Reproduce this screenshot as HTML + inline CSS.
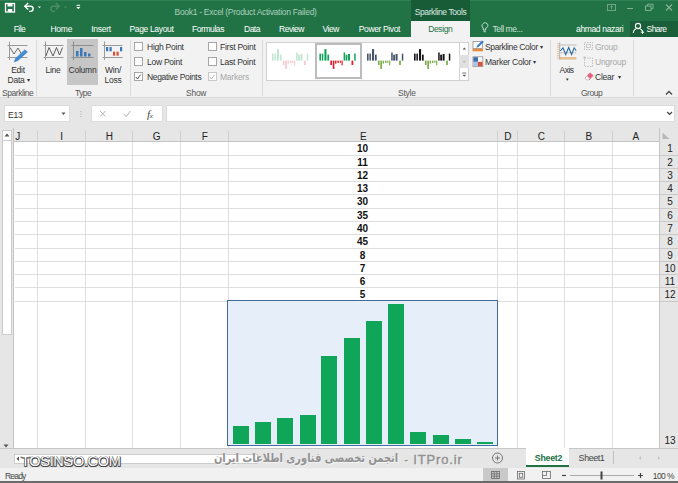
<!DOCTYPE html>
<html>
<head>
<meta charset="utf-8">
<title>Excel Sparkline</title>
<style>
*{box-sizing:border-box;margin:0;padding:0}
html,body{width:678px;height:483px;overflow:hidden;background:#fff}
body{position:relative;font-family:"Liberation Sans",sans-serif;font-size:8px;color:#333}
.a{position:absolute;white-space:nowrap}
.t{position:absolute;white-space:nowrap;line-height:10px;font-size:8.500px;letter-spacing:-0.250px}
.w{color:#fff}
.c{text-align:center}
#top{left:0;top:0;width:678px;height:37px;background:#217346}
#ribbon{left:0;top:37px;width:678px;height:61px;background:#f2f2f2;border-bottom:1px solid #dadada}
#fbar{left:0;top:98px;width:678px;height:30px;background:#e6e6e6}
.sep{position:absolute;width:1px;background:#dadada;top:40px;height:56px}
.cb{position:absolute;width:8.500px;height:8.500px;border:1px solid #a6a6a6;background:#fdfdfd}
.gl{position:absolute;background:#dedede}
.hd{position:absolute;font-size:10px;line-height:14px;color:#222;text-align:center;top:129.500px;height:14px;padding-left:1.500px}
.rh{position:absolute;font-size:10px;line-height:13px;color:#222;text-align:center;left:661px;width:18px}
.num{position:absolute;font-size:10px;font-weight:bold;line-height:13px;color:#111;left:228px;width:269px;text-align:center}
.bar{position:absolute;background:#0fa65a;width:16px}
</style>
</head>
<body>
<!-- top green bar -->
<div class="a" id="top"></div>
<div class="a" style="left:0;top:0;width:678px;height:1px;background:#2f7f57"></div>
<div class="a" style="left:411px;top:0;width:59px;height:21px;background:#185c37"></div>
<div class="a" style="left:411px;top:21px;width:59px;height:16px;background:#f2f2f2"></div>
<div class="a" style="left:630px;top:21px;width:48px;height:16px;background:#1a5f39"></div>
<div class="t w" style="left:174.500px;top:6.500px;color:#a9d0ba;letter-spacing:-0.290px">Book1 - Excel (Product Activation Failed)</div>
<div class="t w" style="left:411px;top:6.500px;width:59px;text-align:center;color:#dcebe2;letter-spacing:-0.400px">Sparkline Tools</div>
<div class="t w" style="left:13.8px;top:24px;font-size:8.500px;letter-spacing:-0.62px">File</div>
<div class="t w" style="left:50.4px;top:24px;font-size:8.500px;letter-spacing:-0.22px">Home</div>
<div class="t w" style="left:91.2px;top:24px;font-size:8.500px;letter-spacing:-0.25px">Insert</div>
<div class="t w" style="left:129.4px;top:24px;font-size:8.500px;letter-spacing:-0.33px">Page Layout</div>
<div class="t w" style="left:192.0px;top:24px;font-size:8.500px;letter-spacing:-0.43px">Formulas</div>
<div class="t w" style="left:244.0px;top:24px;font-size:8.500px;letter-spacing:-0.50px">Data</div>
<div class="t w" style="left:279.0px;top:24px;font-size:8.500px;letter-spacing:-0.48px">Review</div>
<div class="t w" style="left:322.5px;top:24px;font-size:8.500px;letter-spacing:-0.45px">View</div>
<div class="t w" style="left:358.8px;top:24px;font-size:8.500px;letter-spacing:-0.38px">Power Pivot</div>
<div class="t" style="left:410.8px;top:24px;font-size:8.500px;letter-spacing:-0.43px;width:59px;text-align:center;color:#217346">Design</div>
<div class="t w" style="left:492.5px;top:24px;font-size:8.500px;letter-spacing:-0.40px;color:#cfe3d6">Tell me...</div>
<div class="t w" style="left:576.0px;top:24px;font-size:8.500px;letter-spacing:-0.35px">ahmad nazari</div>
<div class="t w" style="left:646.6px;top:24px;font-size:8.500px;letter-spacing:-0.58px">Share</div>
<!-- quick access icons -->
<svg class="a" style="left:0;top:0" width="100" height="20" viewBox="0 0 100 20">
 <rect x="5.5" y="3.5" width="9" height="8.5" fill="none" stroke="#fff" stroke-width="1.3"/>
 <rect x="7.5" y="3.5" width="5" height="3" fill="#fff"/>
 <rect x="7.8" y="9" width="4.4" height="3" fill="#fff"/>
 <path d="M25.5 6.2 h5 a2.6 2.6 0 0 1 0 5.2 h-1.5" fill="none" stroke="#fff" stroke-width="1.4"/>
 <path d="M28.2 3 l-3.4 3.2 3.4 3.2" fill="none" stroke="#fff" stroke-width="1.4"/>
 <path d="M38 6.5 h3 l-1.5 1.8z" fill="#fff"/>
 <path d="M58.5 6.2 h-5 a2.6 2.6 0 0 0 0 5.2 h1.5" fill="none" stroke="#4b8f68" stroke-width="1.4"/>
 <path d="M55.8 3 l3.4 3.2 -3.4 3.2" fill="none" stroke="#4b8f68" stroke-width="1.4"/>
 <path d="M64 6.5 h3 l-1.5 1.8z" fill="#4b8f68"/>
 <rect x="76.5" y="4.8" width="3.6" height="1" fill="#fff"/>
 <path d="M76.3 7 h4 l-2 2.2z" fill="#fff"/>
</svg>
<!-- window controls -->
<svg class="a" style="left:600px;top:0" width="78" height="20" viewBox="0 0 78 20">
 <rect x="7.5" y="4.5" width="8" height="6" fill="none" stroke="#6fa486" stroke-width="1"/>
 <path d="M11.5 9 v-3 M10 7.2 l1.5-1.4 1.5 1.4" fill="none" stroke="#6fa486" stroke-width="0.9"/>
 <path d="M27 8.5 h6" stroke="#7fae93" stroke-width="1"/>
 <rect x="45.500" y="6" width="5.500" height="4.500" fill="none" stroke="#7fae93" stroke-width="1"/>
 <path d="M47.500 6 v-1.800 h5.500 v4.500 h-2" fill="none" stroke="#7fae93" stroke-width="1"/>
 <path d="M66 4.500 l6 6 M72 4.500 l-6 6" stroke="#86b59b" stroke-width="1.100"/>
</svg>
<!-- bulb + share icon -->
<svg class="a" style="left:478px;top:20px" width="200" height="17" viewBox="0 0 200 17">
 <path d="M6.500 3.500 a2.700 2.700 0 1 1 2.400 4.600 v2 h-2.400 v-2 a2.700 2.700 0 0 1 0 -4.600z" fill="none" stroke="#d7e8dd" stroke-width="0.9" transform="translate(-1.200,0)"/>
 <path d="M5.400 11.700 h2.400" stroke="#d7e8dd" stroke-width="0.9"/>
 <circle cx="160" cy="6" r="2.600" fill="none" stroke="#fff" stroke-width="1.100"/>
 <path d="M155.300 13 a4.700 4.700 0 0 1 9.400 0" fill="none" stroke="#fff" stroke-width="1.100"/>
 <path d="M164.500 10.500 v3.400 M162.800 12.200 h3.400" stroke="#fff" stroke-width="1"/>
</svg>

<!-- ribbon -->
<div class="a" id="ribbon"></div>
<div class="sep" style="left:36px"></div>
<div class="sep" style="left:130px"></div>
<div class="sep" style="left:262px"></div>
<div class="sep" style="left:550px"></div>
<div class="sep" style="left:633px"></div>
<div class="a" style="left:67px;top:39px;width:31px;height:46px;background:#c6c6c6"></div>
<!-- ribbon big icons -->
<svg class="a" style="left:0;top:37px" width="135" height="30" viewBox="0 0 135 30">
 <!-- edit data -->
 <path d="M9.500 4.500 v18.500 M7.500 20.500 h20 M7.500 8.500 h20" stroke="#9a9a9a" stroke-width="1" fill="none"/>
 <path d="M10 10.500 l4 6.500 4-6 3.500 6" stroke="#6d6d6d" stroke-width="1" fill="none"/>
 <path d="M14.300 24.700 l1.200-3.200 9.500-8.800 2.400 2.400 -9.700 8.600z" fill="#3f8fd6" stroke="#2a69a8" stroke-width="0.500"/>
 <!-- line -->
 <path d="M45.500 4.500 v18.500 M43.500 20.500 h20 M43.500 8.500 h20" stroke="#9a9a9a" stroke-width="1" fill="none"/>
 <path d="M46 19 l3-8.500 4 8.500 3.500-8.500 3 7.500 3-7.500" stroke="#5e5e5e" stroke-width="1" fill="none"/>
 <!-- column -->
 <path d="M73.500 4.500 v18.500 M71.500 20.500 h22 M71.500 8.500 h22" stroke="#8f8f8f" stroke-width="1" fill="none"/>
 <rect x="76" y="14" width="2.500" height="5.500" fill="#3b78b8"/>
 <rect x="80" y="11" width="2.500" height="8.500" fill="#3b78b8"/>
 <rect x="84" y="15" width="2.500" height="4.500" fill="#3b78b8"/>
 <rect x="88" y="16.500" width="2.500" height="3" fill="#3b78b8"/>
 <!-- win loss -->
 <path d="M104.500 4.500 v18.500 M102.500 20.500 h20 M102.500 8.500 h20" stroke="#9a9a9a" stroke-width="1" fill="none"/>
 <rect x="106" y="10" width="2.200" height="4.300" fill="#3b78b8"/>
 <rect x="109.500" y="10" width="2.200" height="4.300" fill="#3b78b8"/>
 <rect x="113" y="14.700" width="2.200" height="4" fill="#d9533c"/>
 <rect x="116.500" y="14.700" width="2.200" height="4" fill="#d9533c"/>
 <rect x="120" y="10" width="2.200" height="4.300" fill="#3b78b8"/>
</svg>
<div class="t c" style="left:4px;top:65px;width:28px">Edit</div>
<div class="t c" style="left:3.500px;top:75px;width:30px">Data <span style="font-size:6px;vertical-align:1.300px">&#9662;</span></div>
<div class="t c" style="left:39px;top:65px;width:28px">Line</div>
<div class="t c" style="left:67px;top:65px;width:31px">Column</div>
<div class="t c" style="left:100px;top:65px;width:26px">Win/</div>
<div class="t c" style="left:100px;top:75px;width:26px">Loss</div>
<div class="t" style="left:2px;top:88px;color:#555;letter-spacing:-0.450px">Sparkline</div>
<div class="t" style="left:75px;top:88px;color:#555;letter-spacing:-0.550px">Type</div>
<div class="t" style="left:186px;top:88px;color:#555">Show</div>
<div class="t" style="left:398px;top:88px;color:#555">Style</div>
<div class="t" style="left:581px;top:88px;color:#555;letter-spacing:-0.500px">Group</div>
<!-- show checkboxes -->
<div class="cb" style="left:134px;top:42.300px"></div>
<div class="cb" style="left:134px;top:57.300px"></div>
<div class="cb" style="left:134px;top:72.300px"></div>
<div class="cb" style="left:208px;top:42.300px"></div>
<div class="cb" style="left:208px;top:57.300px"></div>
<div class="cb" style="left:208px;top:72.300px;border-color:#c9c9c9"></div>
<svg class="a" style="left:134.300px;top:72.600px" width="90" height="8" viewBox="0 0 90 8">
 <path d="M1.800 4 l1.700 2 3-4.300" fill="none" stroke="#444" stroke-width="0.9"/>
 <path d="M75.800 4 l1.700 2 3-4.300" fill="none" stroke="#b5b5b5" stroke-width="0.9"/>
</svg>
<div class="t" style="left:147px;top:42px">High Point</div>
<div class="t" style="left:147px;top:57px">Low Point</div>
<div class="t" style="left:147px;top:72px;letter-spacing:-0.350px">Negative Points</div>
<div class="t" style="left:220px;top:42px">First Point</div>
<div class="t" style="left:220px;top:57px">Last Point</div>
<div class="t" style="left:220px;top:72px;color:#a8a8a8">Markers</div>
<!-- style gallery -->
<div class="a" style="left:266px;top:42px;width:203px;height:39px;background:#fff;border:1px solid #d0d0d0"></div>
<div class="a" style="left:315px;top:43px;width:47px;height:36px;background:#fff;border:2px solid #bcbcbc"></div>
<div class="a" style="left:459px;top:42px;width:10px;height:39px;background:#fff;border:1px solid #d0d0d0"></div>
<div class="a" style="left:459px;top:55px;width:10px;height:13px;background:#e0e0e0"></div>
<svg class="a" style="left:266px;top:42px" width="204" height="40" viewBox="0 0 204 40">
 <g fill="#c3e6d2"><rect x="5.9" y="11.6" width="1.6" height="7"/><rect x="8.3" y="11.6" width="1.5" height="7"/><rect x="10.9" y="7.1" width="2.1" height="11.5"/><rect x="13.9" y="12.6" width="1.7" height="6"/><rect x="30.1" y="10.5" width="1.5" height="8.1"/><rect x="32.1" y="12.7" width="1.8" height="5.9"/><rect x="34.5" y="12.0" width="2" height="6.6"/><rect x="40.7" y="11.6" width="1.5" height="7"/></g>
 <g fill="#f6cbd3"><rect x="16.8" y="18.6" width="1.7" height="4.4"/><rect x="19.2" y="18.6" width="1.7" height="8.4"/><rect x="21.5" y="18.6" width="1.5" height="3"/><rect x="23.9" y="18.6" width="1.5" height="2.3"/><rect x="26.2" y="18.6" width="1.2" height="2.3"/><rect x="28.0" y="18.6" width="1.2" height="4.8"/><rect x="38.0" y="18.6" width="1.8" height="4.4"/></g>
 <g fill="#12a25c"><rect x="53.4" y="11.6" width="1.6" height="7"/><rect x="55.8" y="11.6" width="1.5" height="7"/><rect x="58.4" y="7.1" width="2.1" height="11.5"/><rect x="61.4" y="12.6" width="1.7" height="6"/><rect x="77.6" y="10.5" width="1.5" height="8.1"/><rect x="79.6" y="12.7" width="1.8" height="5.9"/><rect x="82.0" y="12.0" width="2" height="6.6"/><rect x="88.2" y="11.6" width="1.5" height="7"/></g>
 <g fill="#e0202a"><rect x="64.3" y="18.6" width="1.7" height="4.4"/><rect x="66.7" y="18.6" width="1.7" height="8.4"/><rect x="69.0" y="18.6" width="1.5" height="3"/><rect x="71.4" y="18.6" width="1.5" height="2.3"/><rect x="73.7" y="18.6" width="1.2" height="2.3"/><rect x="75.5" y="18.6" width="1.2" height="4.8"/><rect x="85.5" y="18.6" width="1.8" height="4.4"/></g>
 <g fill="#44546a"><rect x="101.0" y="11.6" width="1.6" height="7"/><rect x="103.4" y="11.6" width="1.5" height="7"/><rect x="106.0" y="7.1" width="2.1" height="11.5"/><rect x="109.0" y="12.6" width="1.7" height="6"/><rect x="125.2" y="10.5" width="1.5" height="8.1"/><rect x="127.2" y="12.7" width="1.8" height="5.9"/><rect x="129.6" y="12.0" width="2" height="6.6"/><rect x="135.8" y="11.6" width="1.5" height="7"/></g>
 <g fill="#7fb04f"><rect x="111.9" y="18.6" width="1.7" height="4.4"/><rect x="114.3" y="18.6" width="1.7" height="8.4"/><rect x="116.6" y="18.6" width="1.5" height="3"/><rect x="119.0" y="18.6" width="1.5" height="2.3"/><rect x="121.3" y="18.6" width="1.2" height="2.3"/><rect x="123.1" y="18.6" width="1.2" height="4.8"/><rect x="133.1" y="18.6" width="1.8" height="4.4"/></g>
 <g fill="#151515"><rect x="148.0" y="11.6" width="1.6" height="7"/><rect x="150.4" y="11.6" width="1.5" height="7"/><rect x="153.0" y="7.1" width="2.1" height="11.5"/><rect x="156.0" y="12.6" width="1.7" height="6"/><rect x="172.2" y="10.5" width="1.5" height="8.1"/><rect x="174.2" y="12.7" width="1.8" height="5.9"/><rect x="176.6" y="12.0" width="2" height="6.6"/><rect x="182.8" y="11.6" width="1.5" height="7"/></g>
 <g fill="#7fb04f"><rect x="158.9" y="18.6" width="1.7" height="4.4"/><rect x="161.3" y="18.6" width="1.7" height="8.4"/><rect x="163.6" y="18.6" width="1.5" height="3"/><rect x="166.0" y="18.6" width="1.5" height="2.3"/><rect x="168.3" y="18.6" width="1.2" height="2.3"/><rect x="170.1" y="18.6" width="1.2" height="4.8"/><rect x="180.1" y="18.6" width="1.8" height="4.4"/></g>
 <path d="M196.500 7.500 l1.800 -2 1.800 2z" fill="#555"/>
 <path d="M196.500 19 l1.800 2 1.800 -2z" fill="#bbb"/>
 <path d="M196.300 31 h4" stroke="#555" stroke-width="0.800"/>
 <path d="M196.500 32.800 l1.800 2 1.800 -2z" fill="#555"/>
</svg>
<!-- sparkline color / marker color -->
<svg class="a" style="left:472px;top:40px" width="20" height="32" viewBox="0 0 20 32">
 <rect x="1" y="1.500" width="9.500" height="7" fill="#fff" stroke="#8f8f8f" stroke-width="0.800"/>
 <path d="M4.300 7.800 l0.800-2.300 5-5 1.700 1.600 -5.200 5z" fill="#3d7fc9"/>
 <rect x="0.500" y="8.700" width="10.500" height="2.600" fill="#e98a3f"/>
 <rect x="1" y="16.800" width="9.800" height="9.800" fill="#fff" stroke="#8f8f8f" stroke-width="0.800"/>
 <rect x="1.400" y="17.200" width="4.600" height="4.600" fill="#3b6db0"/>
 <rect x="1.400" y="21.800" width="4.600" height="4.400" fill="#a9c4e4"/>
 <rect x="6" y="21.800" width="4.400" height="4.400" fill="#d9533c"/>
</svg>
<div class="t" style="left:485px;top:42px;letter-spacing:-0.350px">Sparkline Color <span style="font-size:6px;vertical-align:1.300px">&#9662;</span></div>
<div class="t" style="left:485px;top:57px">Marker Color <span style="font-size:6px;vertical-align:1.300px">&#9662;</span></div>
<!-- axis -->
<svg class="a" style="left:555px;top:40px" width="30" height="24" viewBox="0 0 30 24">
 <path d="M3.100 3 v16.600" stroke="#e9c9a3" stroke-width="1.800" stroke-dasharray="1.200 0.800"/>
 <rect x="4.700" y="17.100" width="16.700" height="2.500" fill="#e6be90"/>
 <path d="M4.700 2.600 v17" stroke="#a9a9a9" stroke-width="0.900"/>
 <path d="M4.700 5 h16.700" stroke="#b5b5b5" stroke-width="0.900"/>
 <path d="M4.700 12.800 h16.700" stroke="#b5b5b5" stroke-width="0.700"/>
 <path d="M5.300 11 l2.700-3.200 2.700 6.700 3-7 2.900 7 2.600-6.700 2 2.900" stroke="#2b6aa3" stroke-width="1.100" fill="none"/>
</svg>
<div class="t c" style="left:552.500px;top:65px;width:28px;letter-spacing:-0.550px">Axis</div>
<div class="t c" style="left:553px;top:74px;width:28px;font-size:5px">&#9662;</div>
<svg class="a" style="left:582px;top:40px" width="14" height="45" viewBox="0 0 14 45">
 <rect x="2.500" y="2.500" width="8" height="7" fill="none" stroke="#b5b5b5" stroke-width="0.800" stroke-dasharray="1.500 1"/>
 <rect x="4.500" y="4.500" width="4" height="3" fill="none" stroke="#c2c2c2" stroke-width="0.800"/>
 <rect x="2.500" y="18" width="8" height="8.500" fill="none" stroke="#b5b5b5" stroke-width="0.800" stroke-dasharray="1.500 1"/>
 <rect x="1.500" y="16.500" width="2" height="2" fill="#c2c2c2"/>
 <path d="M3 38 l5-5.500 3.500 3 -4 4.500 h-2.500z" fill="#e8607a"/>
 <path d="M3 38 l2 -2.200 3 2.800 -1.300 1.400 h-2.200z" fill="#f6f6f6" stroke="#999" stroke-width="0.500"/>
</svg>
<div class="t" style="left:595px;top:42px;color:#a8a8a8">Group</div>
<div class="t" style="left:595px;top:57px;color:#a8a8a8">Ungroup</div>
<div class="t" style="left:595px;top:72px">Clear &nbsp;<span style="font-size:6px;vertical-align:1.300px">&#9662;</span></div>
<svg class="a" style="left:664px;top:89px" width="10" height="8" viewBox="0 0 10 8"><path d="M2 5.500 l3-3 3 3" fill="none" stroke="#444" stroke-width="1.300"/></svg>

<!-- formula bar -->
<div class="a" id="fbar"></div>
<div class="a" style="left:4px;top:105px;width:66px;height:17px;background:#fff;border:1px solid #dcdcdc"></div>
<div class="a" style="left:91px;top:105px;width:72px;height:17px;background:#fff;border:1px solid #dcdcdc"></div>
<div class="a" style="left:166px;top:105px;width:509px;height:17px;background:#fff;border:1px solid #dcdcdc"></div>
<div class="t" style="left:8px;top:110px">E13</div>
<svg class="a" style="left:55px;top:106px" width="120" height="16" viewBox="0 0 120 16">
 <path d="M6.500 6.500 h4 l-2 2.400z" fill="#555"/>
 <path d="M26 5 v1 M26 7.500 v1 M26 10 v1" stroke="#aaa" stroke-width="1"/>
 <path d="M45 5 l5.500 5.500 M50.500 5 l-5.500 5.500" stroke="#b8b8b8" stroke-width="1"/>
 <path d="M69 8 l2.200 2.800 4-5.800" fill="none" stroke="#b8b8b8" stroke-width="1"/>
 <path d="M665.500 6.500 l2 2 2-2" fill="none" stroke="#555" stroke-width="1" transform="translate(-55,0)"/>
</svg>
<div class="t" style="left:147px;top:108.500px;font-family:'Liberation Serif',serif;font-style:italic;font-size:11px;color:#444">f<span style="font-size:7px">x</span></div>
<svg class="a" style="left:662px;top:106px" width="16" height="16" viewBox="0 0 16 16"><path d="M5.200 6 l2.400 2.400 2.400-2.400" fill="none" stroke="#444" stroke-width="1.300"/></svg>

<!-- sheet headers -->
<div class="a" style="left:0;top:128px;width:678px;height:14px;background:#e6e6e6;border-bottom:1px solid #c4c4c4"></div>
<div class="a" style="left:659px;top:128px;width:19px;height:320px;background:#e6e6e6;border-left:1px solid #c4c4c4"></div>
<div class="a" style="left:0;top:128px;width:14px;height:320px;background:#e6e6e6;border-right:1px solid #c4c4c4"></div>
<div class="a" style="left:2px;top:130px;width:10px;height:205px;background:#fff;border:1px solid #cbcbcb"></div>
<div class="a" style="left:2px;top:140px;width:10px;height:1px;background:#cbcbcb"></div>
<div class="hd" style="left:13px;width:8px">J</div>
<div class="hd" style="left:37px;width:48px">I</div>
<div class="hd" style="left:85px;width:47px">H</div>
<div class="hd" style="left:132px;width:48px">G</div>
<div class="hd" style="left:180px;width:48px">F</div>
<div class="hd" style="left:228px;width:269px">E</div>
<div class="hd" style="left:497px;width:20px">D</div>
<div class="hd" style="left:517px;width:47px">C</div>
<div class="hd" style="left:564px;width:48px">B</div>
<div class="hd" style="left:612px;width:46px">A</div>
<!-- grid -->
<div class="gl" style="left:37px;top:142px;width:1px;height:306px"></div>
<div class="a" style="left:37px;top:131px;width:1px;height:10px;background:#cfcfcf"></div>
<div class="gl" style="left:85px;top:142px;width:1px;height:306px"></div>
<div class="a" style="left:85px;top:131px;width:1px;height:10px;background:#cfcfcf"></div>
<div class="gl" style="left:132px;top:142px;width:1px;height:306px"></div>
<div class="a" style="left:132px;top:131px;width:1px;height:10px;background:#cfcfcf"></div>
<div class="gl" style="left:180px;top:142px;width:1px;height:306px"></div>
<div class="a" style="left:180px;top:131px;width:1px;height:10px;background:#cfcfcf"></div>
<div class="gl" style="left:228px;top:142px;width:1px;height:306px"></div>
<div class="a" style="left:228px;top:131px;width:1px;height:10px;background:#cfcfcf"></div>
<div class="gl" style="left:497px;top:142px;width:1px;height:306px"></div>
<div class="a" style="left:497px;top:131px;width:1px;height:10px;background:#cfcfcf"></div>
<div class="gl" style="left:517px;top:142px;width:1px;height:306px"></div>
<div class="a" style="left:517px;top:131px;width:1px;height:10px;background:#cfcfcf"></div>
<div class="gl" style="left:564px;top:142px;width:1px;height:306px"></div>
<div class="a" style="left:564px;top:131px;width:1px;height:10px;background:#cfcfcf"></div>
<div class="gl" style="left:612px;top:142px;width:1px;height:306px"></div>
<div class="a" style="left:612px;top:131px;width:1px;height:10px;background:#cfcfcf"></div>
<div class="gl" style="left:15px;top:155px;width:644px;height:1px"></div>
<div class="a" style="left:660px;top:155px;width:18px;height:1px;background:#c9c9c9"></div>
<div class="gl" style="left:15px;top:168px;width:644px;height:1px"></div>
<div class="a" style="left:660px;top:168px;width:18px;height:1px;background:#c9c9c9"></div>
<div class="gl" style="left:15px;top:181px;width:644px;height:1px"></div>
<div class="a" style="left:660px;top:181px;width:18px;height:1px;background:#c9c9c9"></div>
<div class="gl" style="left:15px;top:194px;width:644px;height:1px"></div>
<div class="a" style="left:660px;top:194px;width:18px;height:1px;background:#c9c9c9"></div>
<div class="gl" style="left:15px;top:208px;width:644px;height:1px"></div>
<div class="a" style="left:660px;top:208px;width:18px;height:1px;background:#c9c9c9"></div>
<div class="gl" style="left:15px;top:221px;width:644px;height:1px"></div>
<div class="a" style="left:660px;top:221px;width:18px;height:1px;background:#c9c9c9"></div>
<div class="gl" style="left:15px;top:234px;width:644px;height:1px"></div>
<div class="a" style="left:660px;top:234px;width:18px;height:1px;background:#c9c9c9"></div>
<div class="gl" style="left:15px;top:248px;width:644px;height:1px"></div>
<div class="a" style="left:660px;top:248px;width:18px;height:1px;background:#c9c9c9"></div>
<div class="gl" style="left:15px;top:261px;width:644px;height:1px"></div>
<div class="a" style="left:660px;top:261px;width:18px;height:1px;background:#c9c9c9"></div>
<div class="gl" style="left:15px;top:274px;width:644px;height:1px"></div>
<div class="a" style="left:660px;top:274px;width:18px;height:1px;background:#c9c9c9"></div>
<div class="gl" style="left:15px;top:287px;width:644px;height:1px"></div>
<div class="a" style="left:660px;top:287px;width:18px;height:1px;background:#c9c9c9"></div>
<div class="gl" style="left:15px;top:301px;width:644px;height:1px"></div>
<div class="a" style="left:660px;top:301px;width:18px;height:1px;background:#c9c9c9"></div>
<div class="num" style="top:142px">10</div>
<div class="rh" style="top:142px">1</div>
<div class="num" style="top:156px">11</div>
<div class="rh" style="top:156px">2</div>
<div class="num" style="top:169px">12</div>
<div class="rh" style="top:169px">3</div>
<div class="num" style="top:182px">13</div>
<div class="rh" style="top:182px">4</div>
<div class="num" style="top:195px">30</div>
<div class="rh" style="top:195px">5</div>
<div class="num" style="top:209px">35</div>
<div class="rh" style="top:209px">6</div>
<div class="num" style="top:222px">40</div>
<div class="rh" style="top:222px">7</div>
<div class="num" style="top:235px">45</div>
<div class="rh" style="top:235px">8</div>
<div class="num" style="top:249px">8</div>
<div class="rh" style="top:249px">9</div>
<div class="num" style="top:262px">7</div>
<div class="rh" style="top:262px">10</div>
<div class="num" style="top:275px">6</div>
<div class="rh" style="top:275px">11</div>
<div class="num" style="top:288px">5</div>
<div class="rh" style="top:288px">12</div>
<div class="rh" style="top:434px">13</div>
<div class="a" style="left:227px;top:300px;width:271px;height:146px;background:#e6eef9;border:1px solid #3f6a99"></div>
<div class="bar" style="left:232.8px;top:425.5px;height:18.1px"></div>
<div class="bar" style="left:255.0px;top:421.6px;height:22.0px"></div>
<div class="bar" style="left:277.3px;top:418.2px;height:25.4px"></div>
<div class="bar" style="left:299.6px;top:414.8px;height:28.8px"></div>
<div class="bar" style="left:321.4px;top:356.2px;height:87.4px"></div>
<div class="bar" style="left:343.6px;top:338.2px;height:105.4px"></div>
<div class="bar" style="left:365.9px;top:321.1px;height:122.5px"></div>
<div class="bar" style="left:388.1px;top:303.6px;height:140.0px"></div>
<div class="bar" style="left:410.3px;top:431.9px;height:11.7px"></div>
<div class="bar" style="left:432.6px;top:435.3px;height:8.3px"></div>
<div class="bar" style="left:454.8px;top:439.1px;height:4.5px"></div>
<div class="bar" style="left:476.6px;top:442.1px;height:1.5px"></div>
<!-- bottom -->
<div class="a" style="left:0;top:448px;width:678px;height:20px;background:#e6e6e6;border-top:1px solid #c6c6c6"></div>
<div class="a" style="left:14px;top:454px;width:244px;height:10px;background:#fff;border:1px solid #cdcdcd"></div>
<div class="a" style="left:526px;top:448px;width:43px;height:18.500px;background:#fff;border-bottom:2px solid #217346"></div>
<div class="t" style="left:527px;top:452.500px;width:43px;text-align:center;font-weight:bold;color:#217346;font-size:8.800px">Sheet2</div>
<div class="t" style="left:571px;top:452.500px;width:41px;text-align:center;color:#444;font-size:9px;letter-spacing:-0.450px">Sheet1</div>
<div class="a" style="left:613px;top:451px;width:1px;height:13px;background:#bdbdbd"></div>
<svg class="a" style="left:480px;top:448px" width="198" height="19" viewBox="0 0 198 19">
 <circle cx="17.500" cy="10" r="5" fill="none" stroke="#6a6a6a" stroke-width="0.900"/>
 <path d="M15 10 h5 M17.500 7.500 v5" stroke="#6a6a6a" stroke-width="0.900"/>
 <path d="M161 8 l-2 2 2 2z" fill="#c2c2c2"/>
 <path d="M178 8 l2 2 -2 2z" fill="#c2c2c2"/>
</svg>
<svg class="a" style="left:0;top:440px" width="30" height="26" viewBox="0 0 30 26">
 <path d="M3.500 4.500 h5 l-2.500 3z" fill="#555"/>
 <path d="M19 16.500 v4.500 l-2.500-2.200z" fill="#555"/>
</svg>
<svg class="a" style="left:0;top:127px" width="14" height="14" viewBox="0 0 14 14">
 <path d="M4.500 9.500 h5 l-2.500-3z" fill="#555"/>
</svg>
<svg class="a" style="left:660px;top:128px" width="18" height="14" viewBox="0 0 18 14"><path d="M2.500 11 h7 l-7 -6.500z" fill="#b9b9b9"/></svg>
<!-- status bar -->
<div class="a" style="left:0;top:468px;width:678px;height:15px;background:#f1f1f1;border-bottom:2px solid #6b6b6b"></div>
<div class="a" style="left:483px;top:468px;width:25px;height:13px;background:#c9c9c9"></div>
<div class="t" style="left:5px;top:470.500px;color:#444;letter-spacing:-0.800px">Ready</div>
<div class="t" style="left:652.800px;top:470.500px;color:#444;letter-spacing:-0.600px">100 %</div>
<svg class="a" style="left:480px;top:467.500px" width="198" height="14" viewBox="0 0 198 14">
 <g fill="none" stroke="#6a6a6a" stroke-width="0.800">
  <rect x="11.500" y="3.500" width="8" height="7"/><path d="M14.200 3.500 v7 M16.900 3.500 v7 M11.500 5.800 h8 M11.500 8.200 h8"/>
  <rect x="37.500" y="3.500" width="7" height="7.500"/><rect x="39.300" y="5.300" width="3.400" height="4"/>
  <rect x="62.500" y="3.500" width="8" height="7"/><path d="M66.500 3.500 v4 h-4"/>
 </g>
 <path d="M82 7.500 h4" stroke="#444" stroke-width="1.200"/>
 <path d="M90 7.500 h64" stroke="#9a9a9a" stroke-width="0.800"/>
 <rect x="120.500" y="3.500" width="2" height="8" fill="#444"/>
 <path d="M158 7.500 h5 M160.500 5 v5" stroke="#444" stroke-width="1.200"/>
</svg>
<!-- watermarks -->
<div class="a" style="left:21px;top:452px;font-size:14.500px;line-height:18px;color:#fff;letter-spacing:-0.300px;text-shadow:-0.500px -0.500px 0 #444,0.500px -0.500px 0 #444,-0.500px 0.500px 0 #444,0.500px 0.500px 0 #444,1.200px 1.200px 0.500px #777">TOSINSO.COM</div>
<div class="a" id="fa" dir="rtl" style="right:279.500px;top:448px;font-family:'DejaVu Sans',sans-serif;font-weight:bold;font-size:12px;line-height:20px;color:#929292;text-shadow:1px 1px 0 #f4f4f4;transform:scaleX(0.822);transform-origin:right center">انجمن تخصصی فناوری اطلاعات ایران</div>
<div class="a" style="left:404.300px;top:448.500px;font-weight:bold;font-size:11.500px;line-height:20px;color:#929292;text-shadow:1px 1px 0 #f4f4f4">-</div>
<div class="a" id="itp" style="left:413.300px;top:449.500px;font-weight:normal;font-size:13px;letter-spacing:0.850px;line-height:20px;color:#929292;-webkit-text-stroke:0.450px #929292;text-shadow:1px 1px 0 #f4f4f4">ITPro.ir</div>
</body>
</html>
